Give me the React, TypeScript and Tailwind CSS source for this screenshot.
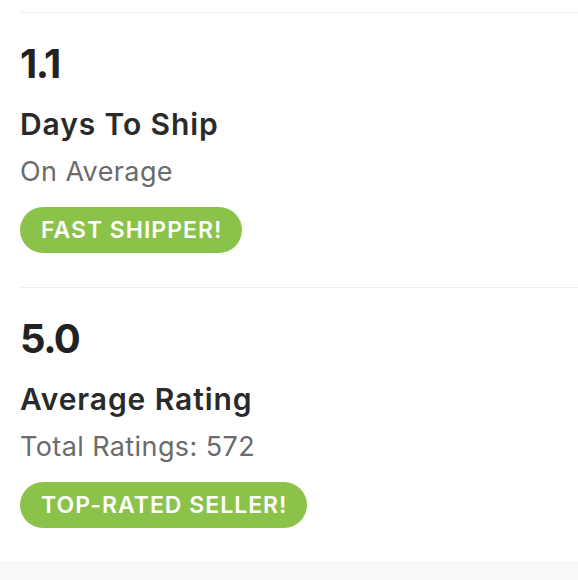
import React from 'react';

interface StatProps {
  value: string;
  title: string;
  subtitle: string;
  badge: string;
}

const Stat: React.FC<StatProps> = ({ value, title, subtitle, badge }) => (
  <section className="border-t border-[#efefef] pt-[27px] pb-[34px]">
    <div className="text-[40px] leading-[48px] font-bold text-[#222222] tracking-[-1.5px]">{value}</div>
    <h3 className="mt-[18px] text-[30px] leading-[36px] font-semibold tracking-[0.9px] text-[#2a2a2a]">{title}</h3>
    <p className="mt-[14px] text-[27px] leading-[32px] tracking-[0.4px] text-[#6b6b6b]">{subtitle}</p>
    <div className="mt-[19px] inline-flex h-[46px] items-center rounded-full bg-[#8bc34a] pl-[21px] pr-[20px] text-[23px] font-semibold tracking-[1px] text-white">
      {badge}
    </div>
  </section>
);

export default function App() {
  return (
    <div className="min-h-[580px] bg-white font-['Inter',sans-serif]">
      <div className="pt-3 pl-5">
        <Stat value="1.1" title="Days To Ship" subtitle="On Average" badge="FAST SHIPPER!" />
        <Stat value="5.0" title="Average Rating" subtitle="Total Ratings: 572" badge="TOP-RATED SELLER!" />
      </div>
      <div className="h-[40px] border-t border-[#f3f3f3] bg-[#f9f9f9]" />
    </div>
  );
}
